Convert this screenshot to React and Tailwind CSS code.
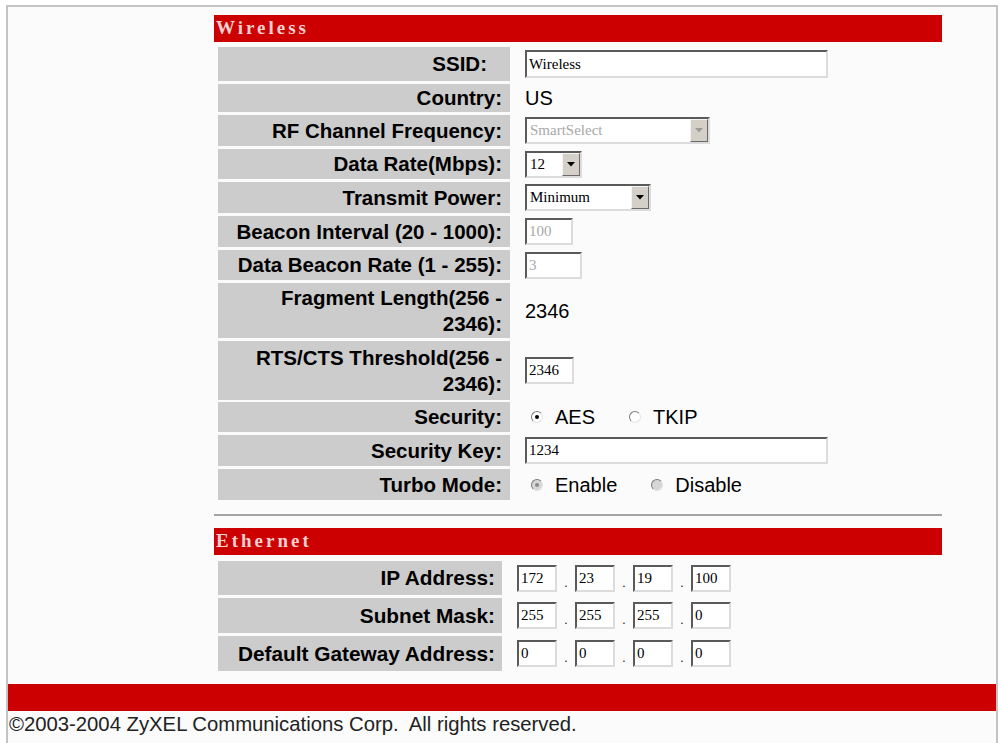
import React from "react";

const inset =
  "border-2 border-t-[#5a5a5a] border-l-[#5a5a5a] border-r-[#dcdcdc] border-b-[#dcdcdc] bg-white";

const TextBox = ({ value, disabled, className }) => (
  <div
    className={`flex items-center pl-[2px] font-['Liberation_Serif',serif] text-[15px] leading-none ${inset} ${
      disabled ? "text-[#a8a8a8]" : "text-black"
    } ${className}`}
  >
    {value}
  </div>
);

const Arrow = ({ disabled }) => (
  <div className="flex h-full w-[18px] items-center justify-center border border-t-[#f4f4f4] border-l-[#f4f4f4] border-r-[#6a6a6a] border-b-[#6a6a6a] bg-[#d4d0c8]">
    <svg width="8" height="5" viewBox="0 0 8 5">
      <polygon points="0,0 8,0 4,4.5" fill={disabled ? "#9a9a9a" : "#000"} />
    </svg>
  </div>
);

const Select = ({ value, disabled, className }) => (
  <div
    className={`flex items-stretch font-['Liberation_Serif',serif] text-[15px] leading-none ${inset} ${
      disabled ? "text-[#a8a8a8]" : "text-black"
    } ${className}`}
  >
    <div className="flex flex-1 items-center pl-[3px]">{value}</div>
    <Arrow disabled={disabled} />
  </div>
);

const Radio = ({ checked, disabled }) => (
  <span
    className={`flex h-[12px] w-[12px] items-center justify-center rounded-full border border-t-[#7a7a7a] border-l-[#7a7a7a] border-r-[#e4e4e4] border-b-[#e4e4e4] ${
      disabled ? "bg-[#d6d6d6]" : "bg-white"
    }`}
  >
    {checked && (
      <span
        className={`h-[4px] w-[4px] rounded-full ${
          disabled ? "bg-[#8a8a8a]" : "bg-black"
        }`}
      />
    )}
  </span>
);

const Row = ({ label, h, mt, labelClass, children }) => (
  <div className={`flex ${h} ${mt}`}>
    <div
      className={`ml-[4px] flex w-[292px] items-center justify-end bg-[#cccccc] text-right text-[20.5px] font-bold leading-[26px] ${labelClass || "pr-[8px]"}`}
    >
      {label}
    </div>
    <div className="flex flex-1 items-center pl-[15px]">{children}</div>
  </div>
);

const IpRow = ({ label, h, mt, parts }) => (
  <div className={`flex ${h} ${mt}`}>
    <div className="ml-[4px] flex w-[284px] items-center justify-end bg-[#cccccc] pr-[7px] text-[20.8px] font-bold">
      {label}
    </div>
    <div className="flex items-center pl-[15px]">
      {parts.map((p, i) => (
        <React.Fragment key={i}>
          {i > 0 && (
            <span className="flex h-[27px] w-[18px] items-end justify-center pb-[3px] text-[12px] leading-none">
              .
            </span>
          )}
          <TextBox value={p} className="h-[27px] w-[40px]" />
        </React.Fragment>
      ))}
    </div>
  </div>
);

const Header = ({ title, className }) => (
  <div
    className={`flex h-[27px] items-center bg-[#cc0000] pl-[2px] font-['Liberation_Serif',serif] text-[19px] font-bold tracking-[3px] text-[#f2d0d0] ${className}`}
  >
    {title}
  </div>
);

export default function App() {
  return (
    <div className="h-[743px] overflow-hidden bg-white pt-[5px] font-['Liberation_Sans',Arial,sans-serif] text-[20px] text-black">
      <div className="ml-[6px] h-[760px] w-[992px] border-2 border-[#c4c4c4] bg-[#fbfbfb] pt-[8px]">
        <div className="ml-[206px] w-[728px]">
          <Header title="Wireless" />
          <Row label="SSID:" h="h-[34px]" mt="mt-[5px]" labelClass="pr-[23px]">
            <TextBox value="Wireless" className="h-[28px] w-[303px]" />
          </Row>
          <Row label="Country:" h="h-[28px]" mt="mt-[3px]">
            <span>US</span>
          </Row>
          <Row label="RF Channel Frequency:" h="h-[31px]" mt="mt-[3px]">
            <Select value="SmartSelect" disabled className="h-[27px] w-[185px]" />
          </Row>
          <Row label="Data Rate(Mbps):" h="h-[30px]" mt="mt-[3px]">
            <Select value="12" className="h-[27px] w-[57px]" />
          </Row>
          <Row label="Transmit Power:" h="h-[31px]" mt="mt-[3px]">
            <Select value="Minimum" className="h-[27px] w-[126px]" />
          </Row>
          <Row label="Beacon Interval (20 - 1000):" h="h-[31px]" mt="mt-[3px]">
            <TextBox value="100" disabled className="h-[27px] w-[48px]" />
          </Row>
          <Row label="Data Beacon Rate (1 - 255):" h="h-[30px]" mt="mt-[3px]">
            <TextBox value="3" disabled className="h-[27px] w-[57px]" />
          </Row>
          <Row
            label={
              <span>
                Fragment Length(256 -<br />
                2346):
              </span>
            }
            h="h-[55px]"
            mt="mt-[3px]"
          >
            <span>2346</span>
          </Row>
          <Row
            label={
              <span>
                RTS/CTS Threshold(256 -<br />
                2346):
              </span>
            }
            h="h-[59px]"
            mt="mt-[3px]"
          >
            <TextBox value="2346" className="h-[27px] w-[49px]" />
          </Row>
          <Row label="Security:" h="h-[30px]" mt="mt-[2px]">
            <div className="flex items-center pl-[6px]">
              <Radio checked />
              <span className="ml-[12px]">AES</span>
              <span className="ml-[34px]">
                <Radio />
              </span>
              <span className="ml-[12px]">TKIP</span>
            </div>
          </Row>
          <Row label="Security Key:" h="h-[31px]" mt="mt-[3px]">
            <TextBox value="1234" className="h-[27px] w-[303px]" />
          </Row>
          <Row label="Turbo Mode:" h="h-[31px]" mt="mt-[3px]">
            <div className="flex items-center pl-[6px]">
              <Radio checked disabled />
              <span className="ml-[12px]">Enable</span>
              <span className="ml-[34px]">
                <Radio disabled />
              </span>
              <span className="ml-[12px]">Disable</span>
            </div>
          </Row>

          <div className="mt-[14px] h-[2px] bg-[#a4a4a4]" />

          <Header title="Ethernet" className="mt-[12px]" />
          <IpRow label="IP Address:" h="h-[34px]" mt="mt-[6px]" parts={["172", "23", "19", "100"]} />
          <IpRow label="Subnet Mask:" h="h-[35px]" mt="mt-[3px]" parts={["255", "255", "255", "0"]} />
          <IpRow label="Default Gateway Address:" h="h-[35px]" mt="mt-[3px]" parts={["0", "0", "0", "0"]} />
        </div>

        <div className="mt-[13px] h-[27px] bg-[#cc0000]" />
        <div className="whitespace-pre pl-[1px] pt-[1px] text-[20.3px] leading-[24px] text-[#222]">
          ©2003-2004 ZyXEL Communications Corp.  All rights reserved.
        </div>
      </div>
    </div>
  );
}
